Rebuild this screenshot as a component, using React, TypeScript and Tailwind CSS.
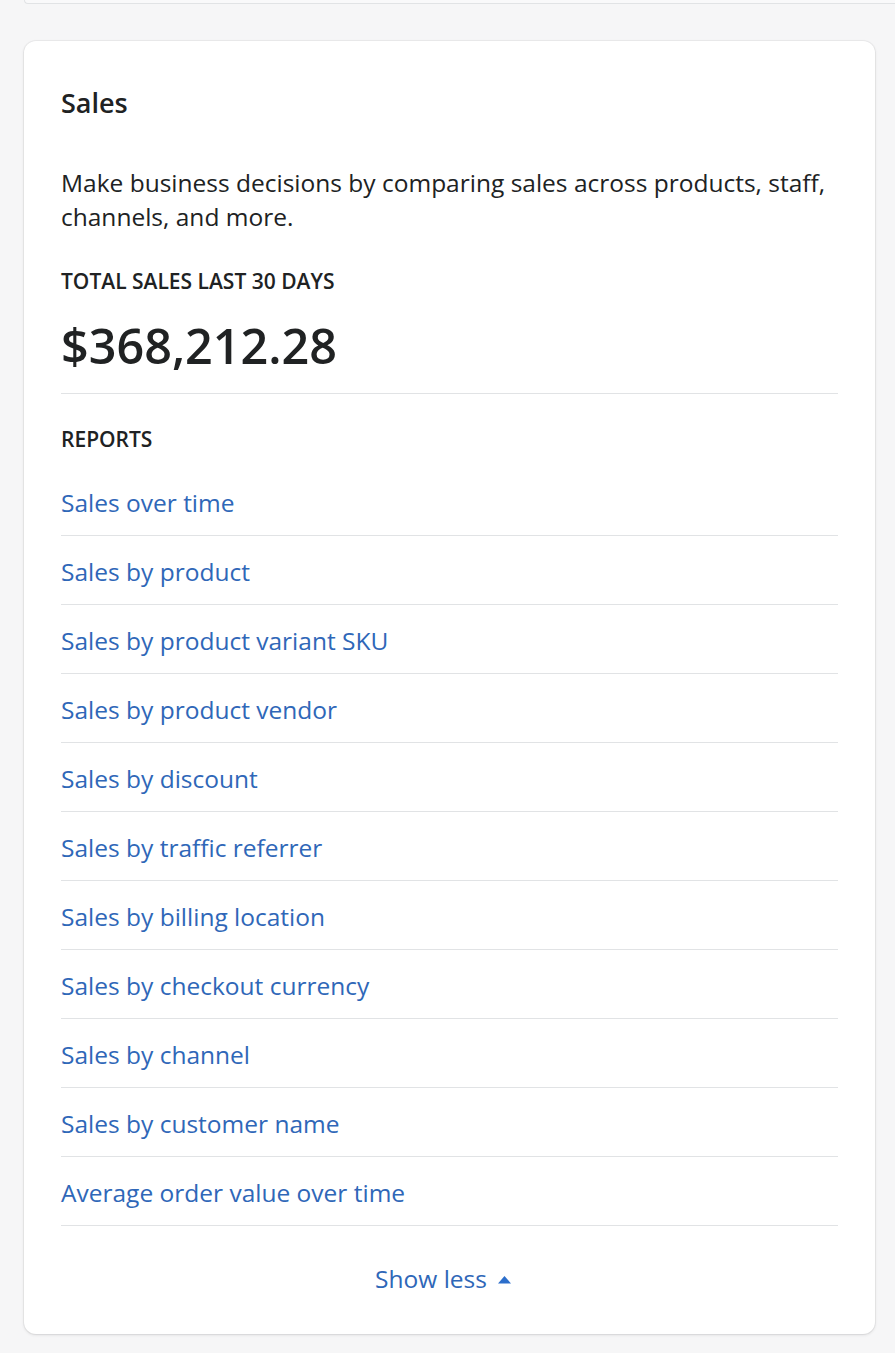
const reports = [
  'Sales over time',
  'Sales by product',
  'Sales by product variant SKU',
  'Sales by product vendor',
  'Sales by discount',
  'Sales by traffic referrer',
  'Sales by billing location',
  'Sales by checkout currency',
  'Sales by channel',
  'Sales by customer name',
  'Average order value over time',
];

export default function App() {
  return (
    <div className="min-h-screen bg-[#f6f6f7] pb-[20px] font-['Open_Sans',sans-serif] text-[#202223]">
      {/* bottom edge of the card above */}
      <div className="ml-[24px] h-[4px] rounded-bl-[12px] border-b border-l border-[#e1e3e5] bg-[#f9f9fa]" />

      <div className="ml-[24px] mt-[37px] w-[851px] rounded-[12px] bg-white px-[37px] pt-[46px] pb-[40px] shadow-[0_0_0_1px_rgba(63,63,68,0.05),0_1px_3px_0_rgba(63,63,68,0.15)]">
        <h2 className="text-[27px] font-semibold leading-[32px]">Sales</h2>

        <p className="mt-[47px] text-[24.5px] leading-[34px] text-[#202223]">
          Make business decisions by comparing sales across products, staff, channels, and more.
        </p>

        <div className="border-b border-[#e1e3e5] pb-[20px]">
          <h3 className="mt-[35px] text-[21px] font-semibold uppercase leading-[24px]">Total sales last 30 days</h3>
          <div className="mt-[24px] text-[48.5px] font-semibold leading-[56px]">$368,212.28</div>
        </div>

        <h3 className="mt-[33px] mb-[16px] text-[21px] font-semibold uppercase leading-[24px]">Reports</h3>

        <ul>
          {reports.map((r) => (
            <li key={r} className="border-b border-[#e1e3e5] pt-[21px] pb-[17px]">
              <a href="#" className="block text-[24.5px] leading-[30px] text-[#2f67b8] hover:underline">
                {r}
              </a>
            </li>
          ))}
        </ul>

        <div className="mt-[38px] flex justify-center pr-[12px]">
          <button type="button" className="flex items-center gap-[10px] text-[24.5px] leading-[30px] text-[#2f67b8]">
            Show less
            <svg width="15" height="9" viewBox="0 0 15 9" className="text-[#2c6ecb]" fill="currentColor">
              <path d="M1 8.5 7.5 1 14 8.5z" />
            </svg>
          </button>
        </div>
      </div>
    </div>
  );
}
